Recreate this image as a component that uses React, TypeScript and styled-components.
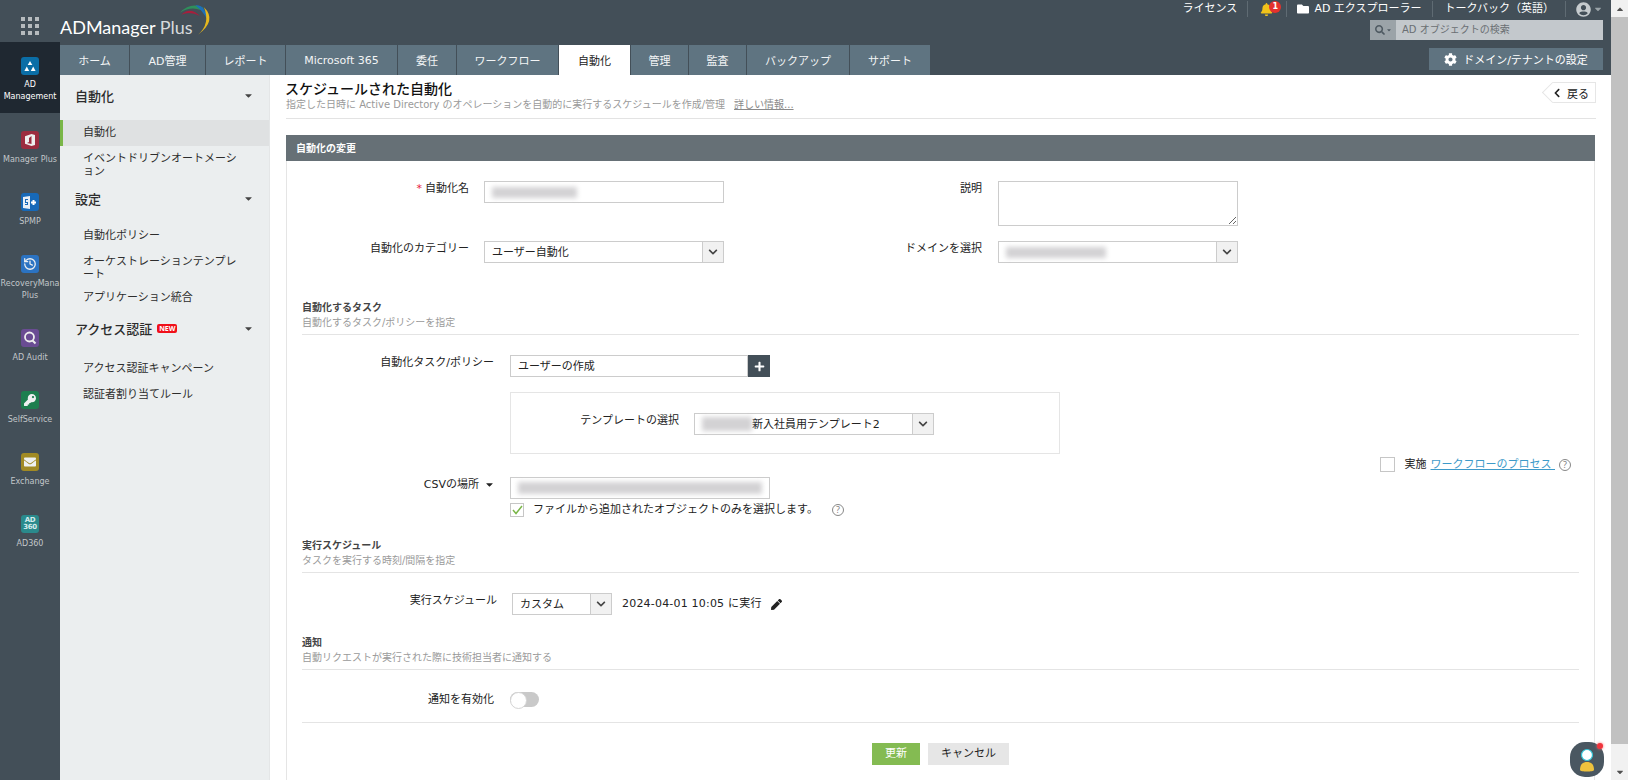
import React from "react";
import styled, { createGlobalStyle } from "styled-components";
import { FaBell, FaCog, FaFolder, FaUserCircle, FaSearch, FaPen, FaKey, FaEnvelope, FaPlus, FaChevronDown, FaChevronLeft, FaCaretDown, FaCaretUp } from "react-icons/fa";
import { History } from "lucide-react";

const FONT = `"DejaVu Sans", "Noto Sans CJK JP", sans-serif`;

const Global = createGlobalStyle`
  html, body { margin: 0; padding: 0; overflow: hidden; background: #fff; }
  body { font-family: ${FONT}; font-size: 11px; color: #222; }
  * { box-sizing: border-box; }
`;

const Frame = styled.div`
  display: flex; width: 1628px; height: 780px; overflow: hidden;
`;
const Rail = styled.nav`
  width: 60px; flex: none; background: #434f58; display: flex; flex-direction: column;
`;
const AppGrid = styled.div`
  height: 42px; flex: none; padding: 17px 0 0 21px;
  display: grid; grid-template-columns: repeat(3, 4px); grid-auto-rows: 4px; gap: 3px;
  span { background: #b6bbbe; }
`;
const RailItem = styled.div<{ $active?: boolean }>`
  display: flex; flex-direction: column; align-items: center;
  padding: 15px 0 ${p => (p.$active ? 10 : 12)}px;
  margin-bottom: ${p => (p.$active ? 3 : 0)}px;
  background: ${p => (p.$active ? "#1f2831" : "transparent")};
  color: ${p => (p.$active ? "#fff" : "#c2c6c9")};
  font-size: 8px; line-height: 12px; text-align: center; white-space: nowrap; overflow: hidden;
`;
const RailIcon = styled.div<{ $bg: string; $active?: boolean }>`
  width: 18px; height: 18px; border-radius: 3px; background: ${p => p.$bg}; margin-bottom: ${p => (p.$active ? 4 : 5)}px; flex: none;
  display: flex; align-items: center; justify-content: center; color: #eef0f1;
`;
const RailNum = styled.span`
  font-size: 7px; line-height: 7px; font-weight: 700; color: #d4ecec; text-align: center; letter-spacing: -0.3px;
`;
const Column = styled.div`
  width: 1551px; flex: none; display: flex; flex-direction: column; height: 780px;
`;
const Header = styled.header`
  background: #434f58; height: 75px; flex: none; display: flex; flex-direction: column;
`;
const TopBar = styled.div`
  height: 45px; display: flex; justify-content: space-between; padding-right: 8px;
`;
const Logo = styled.div`
  position: relative; width: 160px; height: 42px; padding-top: 15px;
  font-family: Lato, "Open Sans", sans-serif; font-size: 18px; line-height: 24px; color: #fff; white-space: nowrap;
  em { font-style: normal; color: #d6dadc; font-weight: 400; }
  svg { position: absolute; left: 110px; top: 0; }
`;
const TopRight = styled.div`
  display: flex; flex-direction: column; align-items: flex-end;
`;
const Utils = styled.div`
  height: 20px; display: flex; align-items: flex-start; color: #fff; font-size: 11px;
`;
const Util = styled.div<{ $sep?: boolean; $pl: number; $pr: number; $gap?: number }>`
  height: 16px; margin-top: 1px; display: flex; align-items: center; gap: ${p => p.$gap ?? 5}px; position: relative;
  padding: 0 ${p => p.$pr}px 0 ${p => p.$pl}px; white-space: nowrap; line-height: 16px;
  border-right: ${p => (p.$sep ? "1px solid #5f6b73" : "none")};
`;
const Badge = styled.span`
  position: absolute; left: 21px; top: 0; width: 12px; height: 12px; border-radius: 50%;
  background: #e5322d; color: #fff; font-size: 8px; font-weight: 700; line-height: 12px; text-align: center;
`;
const Search = styled.div`
  width: 233px; height: 20px; display: flex; background: #c3c8cc;
`;
const SearchIcon = styled.div`
  width: 26px; background: #9ba3a8; color: #4f5a62; display: flex; align-items: center; justify-content: center; gap: 1px;
`;
const SearchText = styled.div`
  flex: 1; padding-left: 6px; font-size: 10px; line-height: 20px; color: #6a6f73;
`;
const TabRow = styled.div`
  height: 30px; display: flex; padding-right: 8px;
`;
const Tab = styled.div<{ $w: number; $active?: boolean }>`
  width: ${p => p.$w}px; height: 30px; display: flex; align-items: center; justify-content: center;
  background: ${p => (p.$active ? "#fff" : "#5f7481")};
  color: ${p => (p.$active ? "#222" : "#f3f5f6")};
  border-right: 1px solid #434f58; font-size: 11px; white-space: nowrap;
`;
const DomainBtn = styled.div`
  margin: 3px 0 0 auto; width: 174px; height: 22px; background: #5f7380; color: #fff;
  display: flex; align-items: center; justify-content: center; gap: 6px; font-size: 11px;
`;
const Body = styled.div`
  flex: 1; min-height: 0; display: flex;
`;
const Side = styled.aside`
  width: 210px; flex: none; background: #ebeeef; border-right: 1px solid #e4e6e7; display: flex; flex-direction: column;
`;
const SideHead = styled.div<{ $h: number; $after: number }>`
  height: ${p => p.$h}px; margin-bottom: ${p => p.$after}px; padding: 0 15px 3px 15px;
  display: flex; align-items: center; font-size: 13px; font-weight: 500; color: #2c2c2c;
  > svg { margin-left: auto; color: #444; }
`;
const NewTag = styled.span`
  margin-left: 5px; width: 20px; height: 9px; border-radius: 2px; background: #f0101a; color: #fff;
  font-size: 7px; font-weight: 700; line-height: 9px; text-align: center; font-family: "Open Sans", sans-serif;
`;
const SideItem = styled.div<{ $active?: boolean; $tight?: boolean }>`
  padding: 6px 22px ${p => (p.$tight ? 4 : 7)}px ${p => (p.$active ? 20 : 23)}px; font-size: 11px; line-height: 13px; color: #2d2d2d;
  background: ${p => (p.$active ? "#dfe1e2" : "transparent")};
  border-left: ${p => (p.$active ? "3px solid #7ab648" : "none")};
`;
const Main = styled.main`
  flex: 1; min-width: 0; padding-left: 16px; display: flex; flex-direction: column;
`;
const TitleRow = styled.div`
  height: 44px; flex: none; padding-top: 6px; margin-right: 15px; border-bottom: 1px solid #e3e3e3;
  display: flex; justify-content: space-between;
`;
const Title = styled.h1`
  margin: 0 0 0 -1px; font-size: 14px; line-height: 17px; font-weight: 500; color: #111;
`;
const Sub = styled.p`
  margin: 0; font-size: 10px; line-height: 14px; color: #9a9a9a; white-space: nowrap;
  u { margin-left: 9px; color: #8a8a8a; }
`;
const Back = styled.div`
  position: relative; width: 44px; height: 21px; margin-top: 1px; border: 1px solid #e6e6e6; border-left: 0;
  display: flex; align-items: center; gap: 5px; font-size: 11px; color: #222; background: #fff;
  &::before {
    content: ""; position: absolute; left: -7px; top: 2px; width: 14px; height: 14px; transform: rotate(45deg);
    border-left: 1px solid #e6e6e6; border-bottom: 1px solid #e6e6e6; background: #fff;
  }
  svg, span { position: relative; z-index: 1; }
`;
const Panel = styled.section`
  flex: 1; margin: 16px 16px 0 0; display: flex; flex-direction: column; min-height: 0;
`;
const PanelHead = styled.div`
  height: 26px; flex: none; background: #667076; color: #fff; font-size: 10px; font-weight: 700; line-height: 27px; padding-left: 10px;
`;
const PanelBody = styled.div`
  flex: 1; border: solid #e5e5e5; border-width: 0 1px; padding: 20px 15px 0;
`;
const TopGrid = styled.div`
  display: grid; grid-template-columns: 182px 240px 274px 240px; grid-template-rows: 45px 22px; row-gap: 15px;
`;
const Label = styled.div<{ $w?: number; $pr?: number }>`
  ${p => (p.$w ? `width: ${p.$w}px; flex: none;` : "")}
  padding: 1px ${p => p.$pr ?? 15}px 0 0; text-align: right; font-size: 11px; line-height: 14px; color: #222; white-space: nowrap;
  i { color: #e8203a; font-style: normal; margin-right: 3px; }
  svg { margin-left: 5px; vertical-align: -2px; }
`;
const Field = styled.div<{ $w: number }>`
  width: ${p => p.$w}px; height: 22px; flex: none; border: 1px solid #ccc; background: #fff; display: flex; align-items: center;
  padding-left: 7px; font-size: 11px; color: #222; white-space: nowrap;
`;
const FieldValue = styled.span`
  margin-top: -3px;
`;
const SelectBox = styled(Field)`
  padding-left: 7px;
`;
const SelectText = styled.div`
  flex: 1; min-width: 0; display: flex; align-items: center;
`;
const Arrow = styled.div`
  width: 21px; height: 20px; flex: none; background: #f1f1f1; border-left: 1px solid #ccc; color: #444;
  display: flex; align-items: center; justify-content: center;
`;
const Blur = styled.span<{ $w: number; $h?: number }>`
  display: inline-block; flex: none; width: ${p => p.$w}px; height: ${p => p.$h ?? 11}px; background: #d3d2d4; filter: blur(2.5px);
`;
const Area = styled.textarea`
  width: 240px; height: 45px; border: 1px solid #ccc; margin: 0; padding: 0; display: block; outline: none; background: #fff;
`;
const SectionHead = styled.div<{ $top: number }>`
  margin-top: ${p => p.$top}px; padding-bottom: 4px; border-bottom: 1px solid #e4e4e4; height: 34px;
  h3 { margin: 0; font-size: 10px; line-height: 14px; font-weight: 700; color: #444; }
  p { margin: 1px 0 0; font-size: 10px; line-height: 14px; color: #9a9a9a; }
`;
const TaskArea = styled.div`
  display: flex; justify-content: space-between; align-items: flex-start;
`;
const TaskLeft = styled.div`
  display: flex; flex-direction: column; padding-top: 20px;
`;
const Row = styled.div<{ $top?: number }>`
  display: flex; margin-top: ${p => p.$top ?? 0}px; align-items: flex-start;
`;
const AddBtn = styled.div`
  width: 22px; height: 22px; background: #434f58; color: #fff; display: flex; align-items: center; justify-content: center; flex: none;
`;
const TemplateBox = styled.div`
  width: 550px; height: 62px; margin: 15px 0 0 208px; border: 1px solid #e5e5e5; padding-top: 20px; display: flex;
`;
const CheckRow = styled.div<{ $top?: number; $left?: number }>`
  display: flex; align-items: center; margin: ${p => p.$top ?? 0}px 0 0 ${p => p.$left ?? 0}px; font-size: 11px; line-height: 14px; white-space: nowrap; color: #222;
`;
const Check = styled.div<{ $size: number; $gap: number }>`
  width: ${p => p.$size}px; height: ${p => p.$size}px; border: 1px solid #c6c6c6; background: #fff; margin-right: ${p => p.$gap}px;
  display: flex; align-items: center; justify-content: center; flex: none;
`;
const Help = styled.span<{ $left: number }>`
  width: 12px; height: 12px; border: 1px solid #888; border-radius: 50%; color: #777; margin-left: ${p => p.$left}px;
  font-size: 9px; line-height: 10px; text-align: center; flex: none; font-family: "Open Sans", sans-serif;
`;
const LinkText = styled.a`
  color: #3d9ac9; text-decoration: underline; margin-left: 4px; white-space: pre;
`;
const RightCheck = styled(CheckRow)`
  margin: 122px 8px 0 0;
`;
const RunText = styled.div`
  margin: 3px 0 0 10px; font-size: 11px; line-height: 16px; white-space: nowrap; display: flex; align-items: center; color: #222; letter-spacing: 0.2px;
  svg { margin-left: 9px; }
`;
const Toggle = styled.div`
  width: 29px; height: 15px; border-radius: 8px; background: #c9c9c9; position: relative; flex: none;
  &::after { content: ""; position: absolute; left: 0; top: 0; width: 15px; height: 15px; border-radius: 50%; background: #fff; border: 1px solid #d4d4d4; }
`;
const Actions = styled.div`
  padding-top: 20px; border-top: 1px solid #e4e4e4; margin-top: 15px; display: flex; gap: 8px; padding-left: 570px;
`;
const Btn = styled.div<{ $primary?: boolean; $w: number }>`
  width: ${p => p.$w}px; height: 22px; background: ${p => (p.$primary ? "#84bb52" : "#e6e6e6")}; color: ${p => (p.$primary ? "#fff" : "#222")};
  font-size: 11px; line-height: 22px; text-align: center;
`;
const Scrollbar = styled.div`
  width: 17px; flex: none; background: #f1f1f1; display: flex; flex-direction: column; align-items: center; color: #505050;
`;
const ScrollEnd = styled.div`
  height: 17px; flex: none; display: flex; align-items: center; justify-content: center;
`;
const Thumb = styled.div`
  width: 100%; height: 727px; background: #c1c1c1; flex: none;
`;
const ScrollGap = styled.div`
  flex: 1;
`;
const Chat = styled.div`
  position: fixed; left: 1570px; top: 742px; width: 34px; height: 35px; border-radius: 15px; background: #4a5761;
  display: flex; align-items: center; justify-content: center;
  &::after { content: ""; position: absolute; right: 1px; top: 1px; width: 6px; height: 6px; border-radius: 50%; background: #f0343c; box-shadow: 0 0 3px #f66; }
`;

const OfficeIcon = () => (
  <svg width="12" height="12" viewBox="0 0 12 12"><path fill="#eee" d="M7.5 0 1 2.2v7.6L7.5 12l3.5-1V1zM7.5 2v8L3 9l2-1V4z" /></svg>
);
const AdIcon = () => (
  <svg width="12" height="11" viewBox="0 0 12 11"><g fill="#fff"><path d="M6 0l2.3 4H3.7z" /><path d="M2.8 5.5l2.4 4.5H.4z" /><path d="M9.2 5.5l2.4 4.5H6.8z" /></g></svg>
);
const SpIcon = () => (
  <svg width="14" height="13" viewBox="0 0 14 13"><path fill="#e8eef5" d="M0 1l7-1v13l-7-1z" /><path fill="#1769b8" d="M5 4H3v2h2v3H2v-1h2V7H2V3h3z" /><path fill="#fff" d="M9.500 5.500H8v2h1.500V9h2V7.500H13v-2h-1.500V4h-2z" /></svg>
);
const AuditIcon = () => (
  <svg width="14" height="14" viewBox="0 0 14 14"><circle cx="6.500" cy="6" r="4.500" fill="none" stroke="#eee" strokeWidth="1.800" /><path d="M9.500 9.500 12.500 12.500" stroke="#eee" strokeWidth="2" /></svg>
);
const LogoArcs = () => (
  <svg width="50" height="40" viewBox="0 0 150 120">
    <path fill="#2f8f5b" d="M30 38Q62 4 102 24L92 30Q62 18 30 38Z" />
    <path fill="#a81e3c" d="M34 44Q60 18 90 48Q60 32 34 44Z" />
    <path fill="#1d6fb8" d="M76 16Q106 12 116 66Q100 34 76 16Z" />
    <path fill="#e6b81e" d="M102 22Q142 62 84 104Q122 72 102 22Z" />
  </svg>
);
const ChatFace = () => (
  <svg width="18" height="26" viewBox="0 0 18 26">
    <circle cx="9" cy="8" r="5.500" fill="#fff" stroke="#2fc5d8" strokeWidth="1.200" />
    <path d="M2 23c0-6 3-8 7-8s7 2 7 8c0 2-14 2-14 0z" fill="#eec23e" />
  </svg>
);
const Chevron = () => <FaChevronDown size={10} />;

const tabs: [string, number, boolean?][] = [
  ["ホーム", 70], ["AD管理", 76], ["レポート", 80], ["Microsoft 365", 112], ["委任", 59], ["ワークフロー", 102],
  ["自動化", 72, true], ["管理", 58], ["監査", 58], ["バックアップ", 103], ["サポート", 81],
];

const rail = [
  { label: ["AD", "Management"], bg: "#0b6ea6", icon: <AdIcon />, active: true },
  { label: ["Manager Plus"], bg: "#9c2c3f", icon: <OfficeIcon /> },
  { label: ["SPMP"], bg: "#1769b8", icon: <SpIcon /> },
  { label: ["RecoveryMana", "Plus"], bg: "#2b73c2", icon: <History size={14} strokeWidth={2.2} /> },
  { label: ["AD Audit"], bg: "#6a4c93", icon: <AuditIcon /> },
  { label: ["SelfService"], bg: "#1d7e4f", icon: <FaKey size={12} /> },
  { label: ["Exchange"], bg: "#a18a24", icon: <FaEnvelope size={12} /> },
  { label: ["AD360"], bg: "#2a8a8c", icon: <RailNum>AD<br />360</RailNum> },
];

export default function App() {
  return (
    <Frame>
      <Global />
      <Rail>
        <AppGrid>{Array.from({ length: 9 }, (_, i) => <span key={i} />)}</AppGrid>
        {rail.map(r => (
          <RailItem key={r.label.join()} $active={r.active}>
            <RailIcon $bg={r.bg} $active={r.active}>{r.icon}</RailIcon>
            {r.label.map(l => <div key={l}>{l}</div>)}
          </RailItem>
        ))}
      </Rail>
      <Column>
        <Header>
          <TopBar>
            <Logo>
              ADManager <em>Plus</em>
              <LogoArcs />
            </Logo>
            <TopRight>
              <Utils>
                <Util $sep $pl={0} $pr={10}>ライセンス</Util>
                <Util $sep $pl={12} $pr={13}>
                  <FaBell size={13} color="#f2c31a" />
                  <Badge>1</Badge>
                </Util>
                <Util $sep $pl={10} $pr={10}><FaFolder size={12} />AD エクスプローラー</Util>
                <Util $sep $pl={12} $pr={11}>トークバック（英語）</Util>
                <Util $pl={10} $pr={0} $gap={2}>
                  <FaUserCircle size={15} color="#c6cbce" />
                  <FaCaretDown size={10} color="#9aa3a8" />
                </Util>
              </Utils>
              <Search>
                <SearchIcon><FaSearch size={10} /><FaCaretDown size={6} /></SearchIcon>
                <SearchText>AD オブジェクトの検索</SearchText>
              </Search>
            </TopRight>
          </TopBar>
          <TabRow>
            {tabs.map(([t, w, a]) => <Tab key={t} $w={w} $active={a}>{t}</Tab>)}
            <DomainBtn><FaCog size={13} />ドメイン/テナントの設定</DomainBtn>
          </TabRow>
        </Header>
        <Body>
          <Side>
            <SideHead $h={43} $after={2}>自動化<FaCaretDown size={11} /></SideHead>
            <SideItem $active>自動化</SideItem>
            <SideItem>イベントドリブンオートメーション</SideItem>
            <SideHead $h={30} $after={8}>設定<FaCaretDown size={11} /></SideHead>
            <SideItem>自動化ポリシー</SideItem>
            <SideItem $tight>オーケストレーションテンプレート</SideItem>
            <SideItem>アプリケーション統合</SideItem>
            <SideHead $h={38} $after={7}>アクセス認証<NewTag>NEW</NewTag><FaCaretDown size={11} /></SideHead>
            <SideItem>アクセス認証キャンペーン</SideItem>
            <SideItem>認証者割り当てルール</SideItem>
          </Side>
          <Main>
            <TitleRow>
              <div>
                <Title>スケジュールされた自動化</Title>
                <Sub>指定した日時に Active Directory のオペレーションを自動的に実行するスケジュールを作成/管理<u>詳しい情報...</u></Sub>
              </div>
              <Back><FaChevronLeft size={10} /><span>戻る</span></Back>
            </TitleRow>
            <Panel>
              <PanelHead>自動化の変更</PanelHead>
              <PanelBody>
                <TopGrid>
                  <Label><i>*</i>自動化名</Label>
                  <Field $w={240}><Blur $w={85} /></Field>
                  <Label $pr={16}>説明</Label>
                  <Area />
                  <Label>自動化のカテゴリー</Label>
                  <SelectBox $w={240}><SelectText><FieldValue>ユーザー自動化</FieldValue></SelectText><Arrow><Chevron /></Arrow></SelectBox>
                  <Label $pr={16}>ドメインを選択</Label>
                  <SelectBox $w={240}><SelectText><Blur $w={100} /></SelectText><Arrow><Chevron /></Arrow></SelectBox>
                </TopGrid>
                <SectionHead $top={38}>
                  <h3>自動化するタスク</h3>
                  <p>自動化するタスク/ポリシーを指定</p>
                </SectionHead>
                <TaskArea>
                  <TaskLeft>
                    <Row>
                      <Label $w={208} $pr={16}>自動化タスク/ポリシー</Label>
                      <Field $w={238}><FieldValue>ユーザーの作成</FieldValue></Field>
                      <AddBtn><FaPlus size={11} /></AddBtn>
                    </Row>
                    <TemplateBox>
                      <Label $w={183} $pr={15}>テンプレートの選択</Label>
                      <SelectBox $w={240}><SelectText><Blur $w={50} $h={14} /><FieldValue>新入社員用テンプレート2</FieldValue></SelectText><Arrow><Chevron /></Arrow></SelectBox>
                    </TemplateBox>
                    <Row $top={23}>
                      <Label $w={208} $pr={15}>CSVの場所<FaCaretDown size={11} /></Label>
                      <Field $w={260}><Blur $w={244} $h={12} /></Field>
                    </Row>
                    <CheckRow $top={4} $left={208}>
                      <Check $size={14} $gap={9}>
                        <svg width="11" height="10" viewBox="0 0 11 10"><path d="M1 5l3 3.500L10 1" fill="none" stroke="#7ab648" strokeWidth="1.500" /></svg>
                      </Check>
                      ファイルから追加されたオブジェクトのみを選択します。
                      <Help $left={14}>?</Help>
                    </CheckRow>
                  </TaskLeft>
                  <RightCheck>
                    <Check $size={15} $gap={10} />
                    実施<LinkText>ワークフローのプロセス </LinkText>
                    <Help $left={4}>?</Help>
                  </RightCheck>
                </TaskArea>
                <SectionHead $top={22}>
                  <h3>実行スケジュール</h3>
                  <p>タスクを実行する時刻/間隔を指定</p>
                </SectionHead>
                <Row $top={20}>
                  <Label $w={210} $pr={15}>実行スケジュール</Label>
                  <SelectBox $w={100}><SelectText><FieldValue>カスタム</FieldValue></SelectText><Arrow><Chevron /></Arrow></SelectBox>
                  <RunText>2024-04-01 10:05 に実行<FaPen size={11} /></RunText>
                </Row>
                <SectionHead $top={21}>
                  <h3>通知</h3>
                  <p>自動リクエストが実行された際に技術担当者に通知する</p>
                </SectionHead>
                <Row $top={22}>
                  <Label $w={208} $pr={16}>通知を有効化</Label>
                  <Toggle />
                </Row>
                <Actions>
                  <Btn $primary $w={48}>更新</Btn>
                  <Btn $w={81}>キャンセル</Btn>
                </Actions>
              </PanelBody>
            </Panel>
          </Main>
        </Body>
      </Column>
      <Scrollbar>
        <ScrollEnd><FaCaretUp size={10} /></ScrollEnd>
        <Thumb />
        <ScrollGap />
        <ScrollEnd><FaCaretDown size={10} /></ScrollEnd>
      </Scrollbar>
      <Chat><ChatFace /></Chat>
    </Frame>
  );
}
